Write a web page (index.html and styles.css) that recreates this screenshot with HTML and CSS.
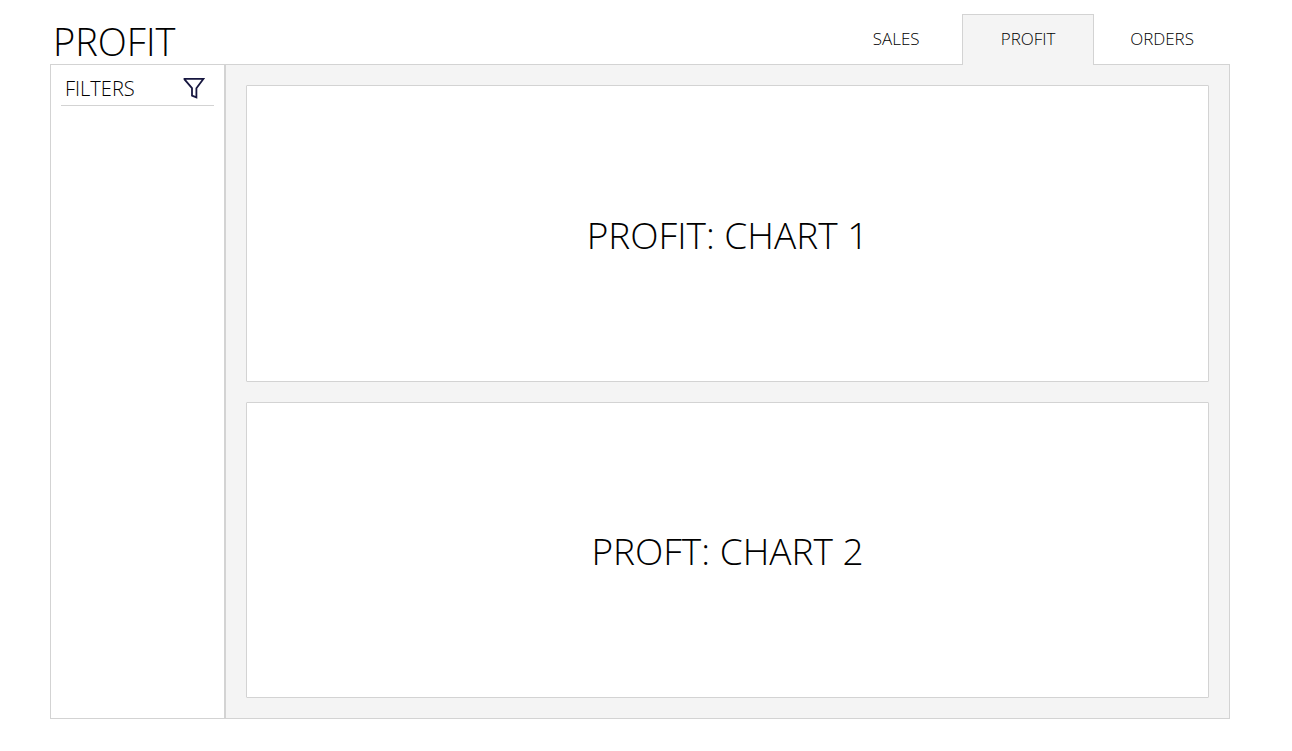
FILE: index.html
```html
<!DOCTYPE html>
<html lang="en">
<head>
<meta charset="utf-8">
<title>Profit</title>
<link rel="stylesheet" href="styles.css">
</head>
<body>
<div class="dashboard">
  <header class="header">
    <h1 class="title">PROFIT</h1>
    <nav class="tabs">
      <a class="tab" href="#sales">SALES</a>
      <a class="tab tab-active" href="#profit" aria-current="page">PROFIT</a>
      <a class="tab" href="#orders">ORDERS</a>
    </nav>
  </header>
  <div class="panels">
    <aside class="sidebar">
      <div class="filters">
        <h2 class="filters-title">FILTERS</h2>
        <button class="filter-button" type="button" aria-label="Filter">
          <svg width="22" height="22" viewBox="0 0 22 22" fill="none" stroke="#16163f" stroke-width="1.8"><path d="M1.5 1.8H20.5L13.4 11.2V20.4L9 18.6V11.2L1.5 2.4Z"/></svg>
        </button>
      </div>
    </aside>
    <main class="charts">
      <section class="chart">PROFIT: CHART 1</section>
      <section class="chart">PROFT: CHART 2</section>
    </main>
  </div>
</div>
</body>
</html>
```
FILE: styles.css
```css
* { box-sizing: border-box; }
body {
  margin: 0;
  background: #fff;
  color: #000;
  font-family: "Open Sans", "Noto Sans", sans-serif;
  font-weight: 300;
}
.dashboard {
  display: flex;
  flex-direction: column;
  min-height: 100vh;
  padding: 14px 62px 32px 50px;
}
.header {
  display: flex;
  justify-content: space-between;
  align-items: flex-end;
}
.title {
  margin: 0;
  padding-left: 3px;
  font-size: 38px;
  font-weight: 300;
  line-height: 46px;
}
.tabs {
  display: flex;
  z-index: 1;
  margin-bottom: -1px;
}
.tab {
  min-width: 132px;
  height: 51px;
  padding: 0 35px;
  border: 1px solid transparent;
  border-bottom: 0;
  color: #000;
  font-size: 17px;
  line-height: 48px;
  text-align: center;
  text-decoration: none;
}
.tab-active {
  border-color: #d3d3d3;
  background: #f4f4f4;
}
.panels {
  display: flex;
  flex: 1;
}
.sidebar {
  width: 175px;
  padding: 0 10px;
  border: 1px solid #d3d3d3;
}
.filters {
  display: flex;
  justify-content: space-between;
  align-items: center;
  height: 41px;
  padding: 6px 9px 0 4px;
  border-bottom: 1px solid #d3d3d3;
}
.filters-title {
  margin: 0;
  font-size: 20px;
  font-weight: 300;
}
.filter-button {
  display: flex;
  padding: 0;
  border: 0;
  background: none;
}
.charts {
  display: flex;
  flex: 1;
  flex-direction: column;
  gap: 20px;
  padding: 20px;
  border: 1px solid #d3d3d3;
  background: #f4f4f4;
}
.chart {
  display: flex;
  flex: 1;
  justify-content: center;
  align-items: center;
  padding-top: 2px;
  border: 1px solid #d3d3d3;
  border-radius: 1px;
  background: #fff;
  font-size: 37px;
}
```
